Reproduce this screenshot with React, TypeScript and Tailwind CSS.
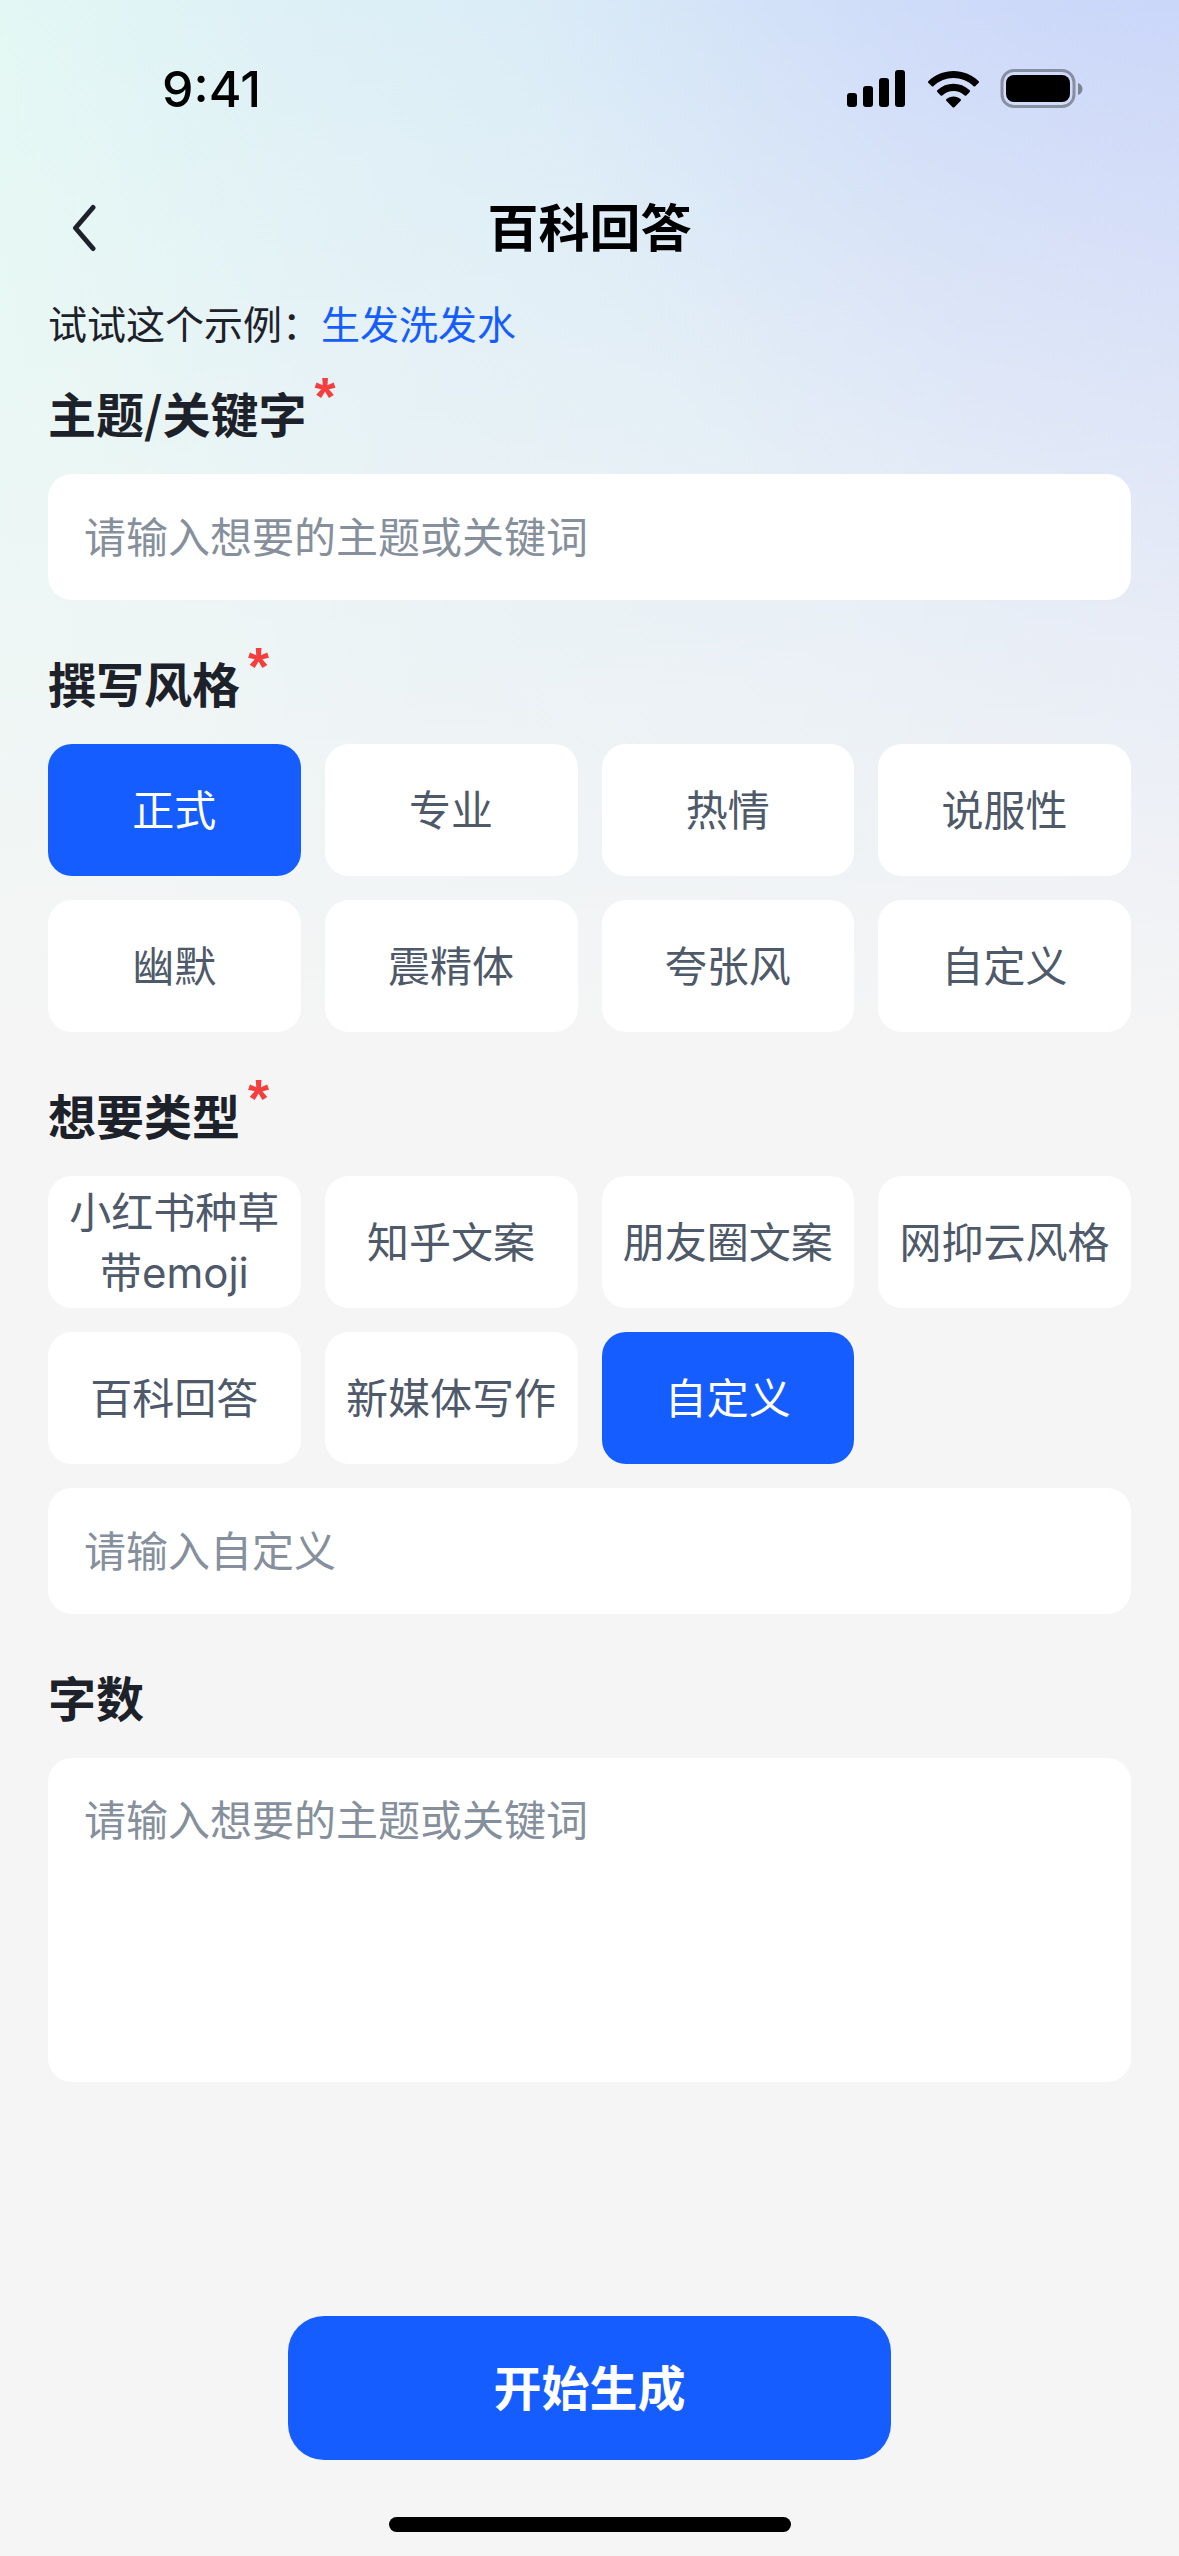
import { useState } from 'react';
import type { ReactNode } from 'react';

const STYLES = ['正式', '专业', '热情', '说服性', '幽默', '震精体', '夸张风', '自定义'];
const TYPES = ['小红书种草带emoji', '知乎文案', '朋友圈文案', '网抑云风格', '百科回答', '新媒体写作', '自定义'];

function StatusBar() {
  return (
    <div className="flex h-[177px] items-center justify-between pr-24 pl-[162px]">
      <span className="text-[50px] leading-[60px] font-medium text-black">9:41</span>
      <svg className="h-10 w-[236px]" viewBox="0 0 236 40" aria-hidden="true">
        <g fill="#000">
          <rect x="0" y="24" width="10" height="14" rx="3" />
          <rect x="16" y="17" width="10" height="21" rx="3" />
          <rect x="32" y="9" width="10" height="29" rx="3" />
          <rect x="48" y="1" width="10" height="37" rx="3" />
          <path d="M81.300 12.200C95.500-1.400 117.500-1.400 131.700 12.200Q132.500 13 131.700 13.800L128.200 17.200Q127.400 17.900 126.600 17.200C115 6.400 98 6.400 86.400 17.200Q85.600 17.900 84.800 17.200L81.300 13.800Q80.500 13 81.300 12.200Z" />
          <path d="M90.300 21.300C99.500 12.700 113.500 12.700 122.700 21.300Q123.500 22.100 122.700 22.900L119.300 26.400Q118.500 27.100 117.700 26.400C111 20.600 102 20.600 95.300 26.400Q94.500 27.100 93.700 26.400L90.300 22.900Q89.500 22.100 90.300 21.300Z" />
          <path d="M99.300 30.200C103.500 26.700 109.500 26.700 113.700 30.200Q114.500 31 113.700 31.800L107.400 38.200Q106.500 39 105.600 38.200L99.300 31.800Q98.500 31 99.300 30.200Z" />
          <rect x="159" y="6" width="64" height="27" rx="8" />
        </g>
        <rect x="155" y="1.500" width="72" height="36" rx="12" fill="none" stroke="#000" strokeOpacity=".35" strokeWidth="3" />
        <path d="M231 14c6 2 6 10 0 12Z" fill="#000" fillOpacity=".4" />
      </svg>
    </div>
  );
}

function Heading({ children, required }: { children: ReactNode; required?: boolean }) {
  return (
    <span className="flex items-start gap-2 pb-1 font-['Noto_Sans_CJK_SC',sans-serif] text-[48px] leading-[68px] font-bold text-[#1D2129]">
      {children}
      {required && (
        <span className="font-['Liberation_Sans','Noto_Sans_CJK_SC',sans-serif] text-[54px] leading-[36px] font-bold text-[#F53F3F]">
          *
        </span>
      )}
    </span>
  );
}

function Chips({ items, value, onChange }: { items: string[]; value: string; onChange: (v: string) => void }) {
  return (
    <div className="grid grid-cols-4 gap-6">
      {items.map((item) => (
        <button
          key={item}
          type="button"
          aria-pressed={item === value}
          onClick={() => onChange(item)}
          className={
            item === value
              ? 'h-[132px] rounded-3xl bg-[#165DFF] px-5 pt-0.5 text-[42px] leading-[60px] text-white'
              : 'h-[132px] rounded-3xl bg-white px-5 pt-0.5 text-[42px] leading-[60px] text-[#4E5969]'
          }
        >
          {item}
        </button>
      ))}
    </div>
  );
}

const FIELD =
  'block w-full rounded-3xl bg-white px-9 text-[42px] leading-[60px] text-[#1D2129] outline-none placeholder:text-[#86909C]';

export default function App() {
  const [style, setStyle] = useState('正式');
  const [type, setType] = useState('自定义');
  const [topic, setTopic] = useState('');

  return (
    <div className="flex min-h-screen flex-col bg-[#F5F5F5] bg-[linear-gradient(to_bottom,rgba(245,245,245,0)_0px,rgba(245,245,245,1)_1050px),radial-gradient(circle_at_100%_0px,rgba(203,215,249,1)_0px,rgba(203,215,249,0)_640px),linear-gradient(80deg,#E2FAF4_0%,#E3F8F4_13%,#DEF1F6_32%,#D9EAF7_62%,#D0DBF9_100%)] bg-[length:100%_1050px] bg-no-repeat font-['Inter','Noto_Sans_CJK_SC',sans-serif]">
      <StatusBar />
      <header className="grid h-[102px] grid-cols-[1fr_auto_1fr] items-center px-12">
        <button type="button" aria-label="返回" className="flex size-[72px] items-center justify-center">
          <svg className="h-12 w-6" viewBox="0 0 24 48" fill="none" stroke="#1D2129" strokeWidth="5" strokeLinecap="round" strokeLinejoin="round" aria-hidden="true">
            <path d="M21 3.500L3.500 24L21 44.500" />
          </svg>
        </button>
        <h1 className="pt-0.5 text-[51px] leading-[72px] font-bold text-black">百科回答</h1>
      </header>
      <form className="flex grow flex-col px-12 pt-[19px]" onSubmit={(e) => e.preventDefault()}>
        <p className="text-[39px] leading-[54px] text-[#1D2129]">
          试试这个示例：
          <button type="button" className="text-[#165DFF]" onClick={() => setTopic('生发洗发水')}>
            生发洗发水
          </button>
        </p>

        <div className="flex flex-col gap-12 pt-[26px]">
          <label className="flex flex-col gap-6">
            <Heading required>主题/关键字</Heading>
            <input
              type="text"
              value={topic}
              onChange={(e) => setTopic(e.target.value)}
              placeholder="请输入想要的主题或关键词"
              className={`${FIELD} h-[126px]`}
            />
          </label>

          <section className="flex flex-col gap-6">
            <h2>
              <Heading required>撰写风格</Heading>
            </h2>
            <Chips items={STYLES} value={style} onChange={setStyle} />
          </section>

          <section className="flex flex-col gap-6">
            <h2>
              <Heading required>想要类型</Heading>
            </h2>
            <Chips items={TYPES} value={type} onChange={setType} />
            <input type="text" aria-label="自定义类型" placeholder="请输入自定义" className={`${FIELD} h-[126px]`} />
          </section>

          <label className="flex flex-col gap-6">
            <Heading>字数</Heading>
            <textarea placeholder="请输入想要的主题或关键词" className={`${FIELD} h-[324px] resize-none py-[33px]`} />
          </label>
        </div>

        <div className="mt-auto flex justify-center pt-12 pb-[57px]">
          <button type="submit" className="h-36 w-[603px] rounded-[36px] bg-[#165DFF] pt-0.5 text-[48px] leading-[72px] font-bold text-white">
            开始生成
          </button>
        </div>
      </form>
      <div className="mx-auto mb-6 h-[15px] w-[402px] rounded-full bg-black" />
    </div>
  );
}
